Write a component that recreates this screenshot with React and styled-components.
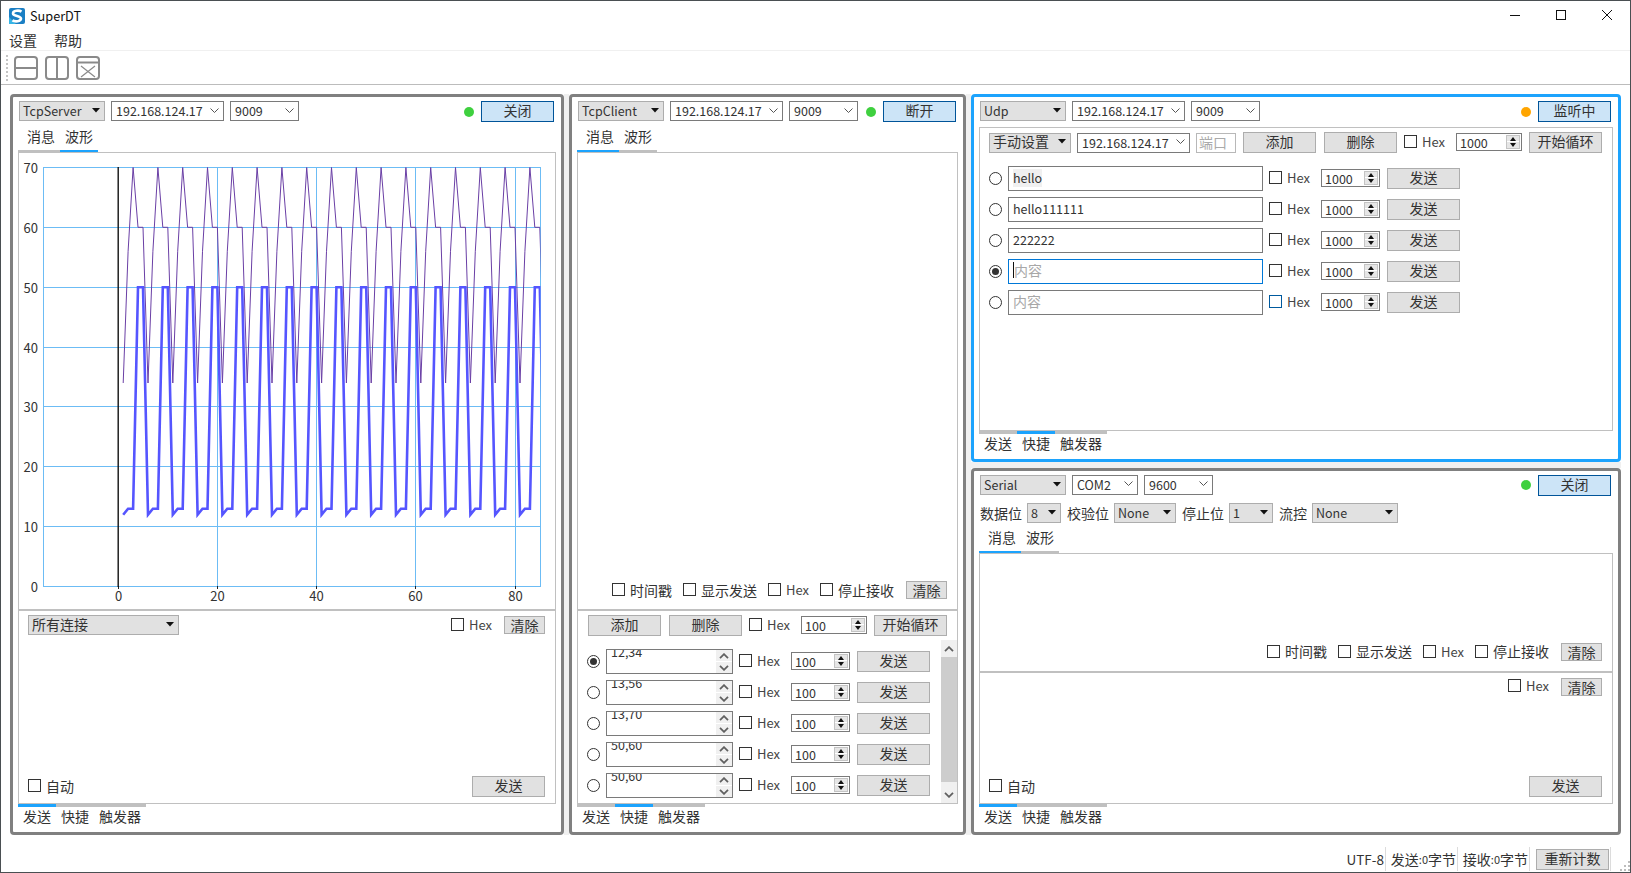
import styled, { createGlobalStyle } from "styled-components"

const samples = [[12, 34], [13, 56], [13, 70], [50, 60], [50, 60]];

const colors = {
    border: "#808080",
    active: "#1ca3fd",
    line: "#c0c0c0",
    btn: "#e1e1e1",
    btnBorder: "#adadad",
    field: "#7a7a7a",
    text: "#333333",
};

const GlobalStyle = createGlobalStyle`
    html, body, #root {
        margin: 0;
        padding: 0;
        width: 100%;
        height: 100%;
    }
    * { box-sizing: border-box; }
    body {
        font-family: "Noto Sans CJK SC", "Noto Sans", sans-serif;
        font-size: 14px;
        color: ${colors.text};
        overflow: hidden;
    }
`;

/* ---------- small controls ---------- */

function Arrow({ edit }) {
    if (edit) {
        return (
            <ArrowSlot>
                <svg width="9" height="6" viewBox="0 0 9 6"><path d="M0.5 0.5 L4.5 4.5 L8.5 0.5" fill="none" stroke="#555" strokeWidth="1" /></svg>
            </ArrowSlot>
        );
    }
    return (
        <ArrowSlot>
            <svg width="8" height="5" viewBox="0 0 8 5"><path d="M0 0 H8 L4 4.5 Z" fill="#111" /></svg>
        </ArrowSlot>
    );
}

function Select({ value, w, edit, cjk }) {
    return (
        <SelectBox $w={w} $edit={edit} $cjk={cjk}>
            <span>{value}</span>
            <Arrow edit={edit} />
        </SelectBox>
    );
}

function Toggle({ label, hover }) {
    return (
        <ToggleWrap>
            <CheckBox $hover={hover} />
            {label === "Hex" ? <HexLabel>Hex</HexLabel> : <ToggleText>{label}</ToggleText>}
        </ToggleWrap>
    );
}

function Spin({ value, w, mr }) {
    return (
        <SpinBox $w={w} $mr={mr}>
            <span>{value}</span>
            <SpinButtons>
                <SpinUp />
                <SpinDown />
            </SpinButtons>
        </SpinBox>
    );
}

function Chevron({ down }) {
    return (
        <svg width="10" height="6" viewBox="0 0 10 6">
            <path d={down ? "M1 0.8 L5 4.8 L9 0.8" : "M1 5.2 L5 1.2 L9 5.2"} fill="none" stroke="#606060" strokeWidth="1.8" />
        </svg>
    );
}

function Tabs({ names, active, bottom }) {
    return (
        <TabStrip $bottom={bottom}>
            {names.map((n, i) => (
                <Tab key={n} $bottom={bottom} $active={i === active} $first={!bottom && i === 0}>{n}</Tab>
            ))}
        </TabStrip>
    );
}

function ConnRow({ mode, ip, port, state, action, ipW = 113 }) {
    return (
        <Row>
            <Select value={mode} w={86} />
            <Select value={ip} w={ipW} edit />
            <Select value={port} w={69} edit />
            <Spacer />
            <Dot $color={state} />
            <Button $w={73} $on>{action}</Button>
        </Row>
    );
}

const msgTabs = ["消息", "波形"];
const sendTabs = ["发送", "快捷", "触发器"];

/* ---------- chart ---------- */

const toX = v => 118.2 + 4.96 * v;
const toY = v => 586.5 - 5.986 * v;

function seriesPoints(col) {
    const pts = [];
    for (let i = 0; i < 86; i++) {
        pts.push(`${toX(i + 1).toFixed(1)},${toY(samples[i % 5][col]).toFixed(1)}`);
    }
    return pts.join(" ");
}

function WaveChart() {
    const ys = [0, 10, 20, 30, 40, 50, 60, 70];
    const xs = [0, 20, 40, 60, 80];
    return (
        <ChartSvg viewBox="19 153 536 456">
            <defs>
                <clipPath id="plot"><rect x="43.5" y="167" width="497" height="420" /></clipPath>
            </defs>
            <rect x="43.5" y="167.5" width="497" height="419" fill="#fff" stroke="#6cbcf5" />
            {ys.map(v => {
                const y = Math.round(toY(v) - 0.5) + 0.5;
                return (
                    <g key={v}>
                        <line x1="43.5" x2="540.5" y1={y} y2={y} stroke="#6cbcf5" />
                        <text x="38" y={y + 5} textAnchor="end" fontSize="13" fill="#333">{v}</text>
                    </g>
                );
            })}
            {xs.map(v => {
                const x = Math.round(toX(v) - 0.5) + 0.5;
                return (
                    <g key={v}>
                        {v > 0 && <line x1={x} x2={x} y1="167" y2="587" stroke="#6cbcf5" />}
                        <line x1={x} x2={x} y1="586" y2="589" stroke="#222" />
                        <text x={x} y="601" textAnchor="middle" fontSize="13" fill="#333">{v}</text>
                    </g>
                );
            })}
            <line x1="118.2" x2="118.2" y1="167" y2="587" stroke="#111" strokeWidth="1.4" />
            <g clipPath="url(#plot)" fill="none">
                <polyline points={seriesPoints(1)} stroke="#6a3fa5" strokeWidth="1" />
                <polyline points={seriesPoints(0)} stroke="#5555ff" strokeWidth="2.6" />
            </g>
        </ChartSvg>
    );
}

/* ---------- pane contents ---------- */

function MessageOptions() {
    return (
        <OptionRow>
            <Toggle label="时间戳" />
            <Toggle label="显示发送" />
            <Toggle label="Hex" />
            <Toggle label="停止接收" />
            <Button $w={41} $h={18} $ml={1}>清除</Button>
        </OptionRow>
    );
}

function SendPane({ connections }) {
    return (
        <Pane $grow>
            <SendHead>
                {connections && <Select value="所有连接" w={151} cjk />}
                <Spacer />
                <Toggle label="Hex" />
                <Button $w={41} $h={18} $ml={12}>清除</Button>
            </SendHead>
            <Spacer />
            <SendFoot>
                <Toggle label="自动" />
                <Spacer />
                <Button $w={73}>发送</Button>
            </SendFoot>
        </Pane>
    );
}

function LoopBar({ children, spinW, spin, left }) {
    return (
        <LoopRow $left={left}>
            {children && <LoopFields>{children}</LoopFields>}
            <Button $w={73}>添加</Button>
            <Button $w={73} $ml={1}>删除</Button>
            <Toggle label="Hex" />
            <Spin value={spin} w={spinW} />
            <Button $w={73}>开始循环</Button>
        </LoopRow>
    );
}

function ShortcutRow({ checked, spin, hover, children }) {
    return (
        <ShortRow>
            <Radio $checked={checked} />
            {children}
            <Toggle label="Hex" hover={hover} />
            <Spin value={spin} w={59} mr={1} />
            <Button $w={73}>发送</Button>
        </ShortRow>
    );
}

/* ---------- app ---------- */

export default function App() {
    return (
        <Window>
            <GlobalStyle />
            <TitleBar>
                <svg width="16" height="16" viewBox="0 0 16 16">
                    <rect width="16" height="16" rx="2" fill="#1b7fc4" />
                    <path d="M0 16 L0 9 L7 16 Z" fill="#36b4e5" />
                    <path d="M12.5 3.6 C10 2 4 2.4 4 5.4 C4 8.4 12 7.6 12 10.6 C12 13.6 6 14 3.4 12.4" fill="none" stroke="#fff" strokeWidth="2.6" />
                </svg>
                <TitleText>SuperDT</TitleText>
                <Spacer />
                <WinButton>
                    <svg width="10" height="10" viewBox="0 0 10 10"><path d="M0 5.5 H10" stroke="#111" /></svg>
                </WinButton>
                <WinButton>
                    <svg width="10" height="10" viewBox="0 0 10 10"><rect x="0.5" y="0.5" width="9" height="9" fill="none" stroke="#111" /></svg>
                </WinButton>
                <WinButton>
                    <svg width="10" height="10" viewBox="0 0 10 10"><path d="M0 0 L10 10 M10 0 L0 10" stroke="#111" /></svg>
                </WinButton>
            </TitleBar>
            <MenuBar>
                <MenuItem>设置</MenuItem>
                <MenuItem>帮助</MenuItem>
            </MenuBar>
            <ToolBar>
                <Grip />
                <ToolIcon><rect x="1" y="1" width="22" height="22" rx="3" /><path d="M1 12 H23" /></ToolIcon>
                <ToolIcon><rect x="1" y="1" width="22" height="22" rx="3" /><path d="M12 1 V23" /></ToolIcon>
                <ToolIcon><rect x="1" y="1" width="22" height="22" rx="3" /><path d="M1 6.5 H23" /><path d="M5 10 L19 21 M19 10 L5 21" strokeWidth="1.2" /></ToolIcon>
            </ToolBar>

            <Main>
                <Panel $w={554}>
                    <ConnRow mode="TcpServer" ip="192.168.124.17" port="9009" state="#3fd03f" action="关闭" />
                    <Tabs names={msgTabs} active={1} />
                    <Pane $h={458}>
                        <WaveChart />
                    </Pane>
                    <SendPane connections />
                    <Tabs names={sendTabs} active={0} bottom />
                </Panel>

                <SplitV />

                <Panel $w={397}>
                    <ConnRow mode="TcpClient" ip="192.168.124.17" port="9009" state="#3fd03f" action="断开" />
                    <Tabs names={msgTabs} active={0} />
                    <Pane $h={458}>
                        <Spacer />
                        <MessageOptions />
                    </Pane>
                    <Pane $grow>
                        <LoopBar spin="100" spinW={66} left={10} />
                        <ScrollArea>
                            <Rows>
                                {["12,34", "13,56", "13,70", "50,60", "50,60"].map((t, i) => (
                                    <ShortcutRow key={i} checked={i === 0} spin="100">
                                        <TextEdit>
                                            <ClippedText>{t}</ClippedText>
                                            <EditArrows>
                                                <EditArrow><Chevron /></EditArrow>
                                                <EditArrow><Chevron down /></EditArrow>
                                            </EditArrows>
                                        </TextEdit>
                                    </ShortcutRow>
                                ))}
                            </Rows>
                            <ScrollBar>
                                <ScrollEnd><Chevron /></ScrollEnd>
                                <ScrollThumb />
                                <Spacer />
                                <ScrollEnd><Chevron down /></ScrollEnd>
                            </ScrollBar>
                        </ScrollArea>
                    </Pane>
                    <Tabs names={sendTabs} active={1} bottom />
                </Panel>

                <SplitV />

                <RightColumn>
                    <Panel $selected $grow>
                        <ConnRow mode="Udp" ip="192.168.124.17" port="9009" state="#ffa500" action="监听中" />
                        <Pane $grow $mt={5}>
                            <LoopBar spin="1000" spinW={66} left={9}>
                                <Select value="手动设置" w={82} cjk />
                                <Select value="192.168.124.17" w={113} edit />
                                <PortField>端口</PortField>
                            </LoopBar>
                            <UdpRows>
                                <ShortcutRow spin="1000"><Field><Picked>hello</Picked></Field></ShortcutRow>
                                <ShortcutRow spin="1000"><Field>hello111111</Field></ShortcutRow>
                                <ShortcutRow spin="1000"><Field>222222</Field></ShortcutRow>
                                <ShortcutRow spin="1000" checked><Field $focused><Hint $caret>内容</Hint></Field></ShortcutRow>
                                <ShortcutRow spin="1000" hover><Field><Hint>内容</Hint></Field></ShortcutRow>
                            </UdpRows>
                        </Pane>
                        <Tabs names={sendTabs} active={1} bottom />
                    </Panel>

                    <SplitH />

                    <Panel $grow>
                        <ConnRow mode="Serial" ip="COM2" ipW={66} port="9600" state="#3fd03f" action="关闭" />
                        <SerialRow>
                            <SerialField>数据位<Select value="8" w={34} /></SerialField>
                            <SerialField>校验位<Select value="None" w={62} /></SerialField>
                            <SerialField>停止位<Select value="1" w={44} /></SerialField>
                            <SerialField>流控<Select value="None" w={86} /></SerialField>
                        </SerialRow>
                        <Tabs names={msgTabs} active={0} />
                        <Pane $h={119}>
                            <Spacer />
                            <MessageOptions />
                        </Pane>
                        <SendPane />
                        <Tabs names={sendTabs} active={0} bottom />
                    </Panel>
                </RightColumn>
            </Main>

            <StatusBar>
                <StatusCell $w={60}><Narrow $size={13.5}>UTF-8</Narrow></StatusCell>
                <StatusCell $w={72}>发送<Narrow $size={11}>:0</Narrow>字节</StatusCell>
                <StatusCell $w={72}>接收<Narrow $size={11}>:0</Narrow>字节</StatusCell>
                <StatusCell $w={81}><Button $w={73}>重新计数</Button></StatusCell>
                <SizeGrip>
                    <svg width="10" height="10" viewBox="0 0 10 10" fill="#bdbdbd">
                        <rect x="8" y="0" width="2" height="2" />
                        <rect x="4" y="4" width="2" height="2" /><rect x="8" y="4" width="2" height="2" />
                        <rect x="0" y="8" width="2" height="2" /><rect x="4" y="8" width="2" height="2" /><rect x="8" y="8" width="2" height="2" />
                    </svg>
                </SizeGrip>
            </StatusBar>
        </Window>
    )
}

/* ---------- styles ---------- */

const Window = styled.div`
    width: 1631px;
    height: 873px;
    display: flex;
    flex-direction: column;
    background: #fff;
    border: 1px solid #4a4f52;
`;

const TitleBar = styled.div`
    height: 29px;
    flex: none;
    display: flex;
    align-items: center;
    padding-left: 8px;
`;

const TitleText = styled.span`
    margin-left: 5px;
    font-size: 12.7px;
    color: #111;
`;

const WinButton = styled.div`
    width: 46px;
    height: 29px;
    display: flex;
    align-items: center;
    justify-content: center;
    margin-top: -2px;
`;

const MenuBar = styled.div`
    height: 21px;
    flex: none;
    display: flex;
    align-items: center;
    gap: 17px;
    padding-left: 8px;
    border-bottom: 1px solid #f0f0f0;
`;

const MenuItem = styled.span`
    line-height: 20px;
`;

const ToolBar = styled.div`
    height: 34px;
    flex: none;
    display: flex;
    align-items: center;
    gap: 7px;
    padding-left: 5px;
    border-bottom: 1px solid #bcbcbc;
`;

const Grip = styled.div`
    width: 2px;
    height: 26px;
    margin-right: -1px;
    border-left: 2px dotted #c4c4c4;
`;

const ToolIcon = styled.svg.attrs({ viewBox: "0 0 24 24", width: 24, height: 24 })`
    fill: none;
    stroke: #8a8a8a;
    stroke-width: 2;
`;

const Main = styled.div`
    flex: 1;
    min-height: 0;
    display: flex;
    align-items: stretch;
    padding: 9px 0 12px 9px;
`;

const SplitV = styled.div`
    width: 5px;
    flex: none;
    background: #f0f0f0;
`;

const SplitH = styled.div`
    height: 6px;
    flex: none;
    background: #f0f0f0;
`;

const RightColumn = styled.div`
    width: 650px;
    flex: none;
    display: flex;
    flex-direction: column;
`;

const Panel = styled.section`
    ${p => p.$w ? `width: ${p.$w}px; flex: none;` : ""}
    ${p => p.$grow ? "flex: 1; min-height: 0;" : ""}
    display: flex;
    flex-direction: column;
    padding: 4px 5px 0;
    background: #fff;
    border: 3px solid ${p => p.$selected ? colors.active : colors.border};
    border-radius: 4px;
`;

const Row = styled.div`
    height: 21px;
    flex: none;
    display: flex;
    align-items: center;
    gap: 6px;
    padding: 0 2px 0 1px;
`;

const Spacer = styled.div`
    flex: 1;
`;

const Dot = styled.span`
    width: 10px;
    height: 10px;
    flex: none;
    margin: 0 1px 0 -4px;
    border-radius: 50%;
    background: ${p => p.$color};
`;

const SelectBox = styled.div`
    width: ${p => p.$w}px;
    height: 20px;
    flex: none;
    align-self: flex-start;
    display: flex;
    align-items: center;
    justify-content: space-between;
    padding: 0 0 ${p => p.$cjk ? 2 : 1}px ${p => p.$edit ? 4 : 3}px;
    font-size: ${p => p.$cjk ? 14 : 12.5}px;
    line-height: 17px;
    white-space: nowrap;
    color: ${colors.text};
    background: ${p => p.$edit ? "#fff" : colors.btn};
    border: 1px solid ${p => p.$edit ? colors.field : colors.btnBorder};
`;

const ArrowSlot = styled.span`
    width: 17px;
    flex: none;
    display: flex;
    align-items: center;
    justify-content: center;
`;

const Button = styled.button`
    width: ${p => p.$w}px;
    height: ${p => p.$h || 21}px;
    flex: none;
    margin: 0 0 0 ${p => p.$ml || 0}px;
    padding: 0 0 3px;
    font-family: inherit;
    font-size: 14px;
    line-height: 16px;
    color: ${colors.text};
    background: ${p => p.$on ? "#cce4f7" : colors.btn};
    border: 1px solid ${p => p.$on ? "#005499" : colors.btnBorder};
`;

const ToggleWrap = styled.label`
    height: 18px;
    margin-bottom: 1px;
    display: flex;
    align-items: center;
    flex: none;
    gap: 5px;
    white-space: nowrap;
    line-height: 18px;
`;

const ToggleText = styled.span`
    margin-top: -1px;
`;

const CheckBox = styled.span`
    width: 13px;
    height: 13px;
    flex: none;
    margin-bottom: 1px;
    background: #fff;
    border: 1px solid ${p => p.$hover ? "#005a9e" : "#333"};
`;

const HexLabel = styled.span`
    width: 23px;
    font-size: 13px;
    color: #444;
`;

const Radio = styled.span`
    width: 13px;
    height: 13px;
    flex: none;
    border: 1px solid #333;
    border-radius: 50%;
    background: #fff;
    display: flex;
    align-items: center;
    justify-content: center;
    &::after {
        content: "";
        width: 7px;
        height: 7px;
        border-radius: 50%;
        background: ${p => p.$checked ? "#333" : "transparent"};
    }
`;

const SpinBox = styled.div`
    width: ${p => p.$w}px;
    height: 18px;
    flex: none;
    margin: 0 ${p => p.$mr || 0}px 1px 0;
    display: flex;
    align-items: center;
    justify-content: space-between;
    padding-left: 3px;
    font-size: 12.5px;
    line-height: 15px;
    background: #fff;
    border: 1px solid ${colors.field};
`;

const SpinButtons = styled.div`
    width: 14px;
    height: 14px;
    margin-right: 1px;
    display: flex;
    flex-direction: column;
    background: #e6e6e6;
    border: 1px solid #c4c4c4;
`;

const SpinUp = styled.span`
    height: 6px;
    display: flex;
    align-items: center;
    justify-content: center;
    border-bottom: 1px solid #fff;
    &::after {
        content: "";
        border: 3.5px solid transparent;
        border-top: 0;
        border-bottom: 4px solid #111;
    }
`;

const SpinDown = styled.span`
    height: 6px;
    display: flex;
    align-items: center;
    justify-content: center;
    &::after {
        content: "";
        border: 3.5px solid transparent;
        border-bottom: 0;
        border-top: 4px solid #111;
    }
`;

const TabStrip = styled.div`
    flex: none;
    height: ${p => p.$bottom ? 28 : 30}px;
    display: flex;
`;

const Tab = styled.div`
    height: 100%;
    flex: none;
    display: flex;
    align-items: ${p => p.$bottom ? "flex-start" : "center"};
    padding: ${p => p.$bottom ? "0 5px" : `0 5px 0 ${p.$first ? 9 : 5}px`};
    line-height: ${p => p.$bottom ? 18 : 22}px;
    ${p => p.$bottom ? "border-top" : "border-bottom"}: ${p => p.$bottom ? 3 : 2}px solid ${p => p.$active ? colors.active : colors.line};
`;

const Pane = styled.div`
    ${p => p.$h ? `height: ${p.$h}px; flex: none;` : ""}
    ${p => p.$grow ? "flex: 1; min-height: 0;" : ""}
    ${p => p.$mt ? `margin-top: ${p.$mt}px;` : ""}
    display: flex;
    flex-direction: column;
    background: #fff;
    border: 1px solid ${colors.line};
`;

const ChartSvg = styled.svg`
    display: block;
    width: 536px;
    height: 456px;
    font-family: "Noto Sans CJK SC", "Noto Sans", sans-serif;
`;

const OptionRow = styled.div`
    height: 18px;
    flex: none;
    display: flex;
    align-items: flex-start;
    justify-content: flex-end;
    gap: 11px;
    margin: 0 10px 10px 0;
`;

const SendHead = styled.div`
    height: 20px;
    flex: none;
    display: flex;
    align-items: center;
    margin: 4px 10px 0 9px;
`;

const SendFoot = styled.div`
    height: 21px;
    flex: none;
    display: flex;
    align-items: center;
    margin: 0 10px 6px 9px;
`;

const LoopRow = styled.div`
    height: 21px;
    flex: none;
    display: flex;
    align-items: center;
    gap: 7px;
    margin: 4px 10px 0 ${p => p.$left}px;
    & > label { margin-right: 4px; }
`;

const LoopFields = styled.div`
    display: flex;
    align-items: center;
    gap: 6px;
`;

const PortField = styled.div`
    width: 40px;
    height: 20px;
    flex: none;
    padding-left: 2px;
    line-height: 16px;
    color: #aaa;
    border: 1px solid #b8b8b8;
`;

const ScrollArea = styled.div`
    flex: 1;
    min-height: 0;
    margin-top: 4px;
    display: flex;
`;

const Rows = styled.div`
    flex: 1;
    display: flex;
    flex-direction: column;
    padding: 6px 0 0 9px;
`;

const UdpRows = styled.div`
    flex: 1;
    display: flex;
    flex-direction: column;
    padding: 10px 0 0 9px;
`;

const ShortRow = styled.div`
    height: 31px;
    flex: none;
    display: flex;
    align-items: center;
    gap: 6px;
    & > label { margin-right: 5px; }
`;

const Field = styled.div`
    width: 255px;
    height: 25px;
    flex: none;
    padding-left: 4px;
    font-size: 12.5px;
    line-height: 22px;
    border: 1px solid ${p => p.$focused ? "#0078d7" : colors.field};
`;

const Picked = styled.span`
    display: inline-block;
    background: #f0f0f0;
    line-height: 18px;
`;

const Hint = styled.span`
    display: inline-block;
    font-size: 14px;
    line-height: 16px;
    color: #a8a8a8;
    ${p => p.$caret ? "border-left: 1px solid #111;" : ""}
`;

const TextEdit = styled.div`
    width: 127px;
    height: 25px;
    flex: none;
    display: flex;
    overflow: hidden;
    background: #fff;
    border: 1px solid ${colors.field};
`;

const ClippedText = styled.div`
    flex: 1;
    padding-left: 4px;
    margin-top: -6px;
    font-size: 12.5px;
    line-height: 16px;
`;

const EditArrows = styled.div`
    width: 16px;
    display: flex;
    flex-direction: column;
    gap: 1px;
`;

const EditArrow = styled.div`
    flex: 1;
    display: flex;
    align-items: center;
    justify-content: center;
    background: #f0f0f0;
`;

const ScrollBar = styled.div`
    width: 16px;
    flex: none;
    display: flex;
    flex-direction: column;
    background: #f0f0f0;
`;

const ScrollEnd = styled.div`
    height: 17px;
    flex: none;
    display: flex;
    align-items: center;
    justify-content: center;
`;

const ScrollThumb = styled.div`
    height: 125px;
    flex: none;
    background: #cdcdcd;
`;

const SerialRow = styled.div`
    height: 20px;
    flex: none;
    display: flex;
    align-items: center;
    gap: 6px;
    margin-top: 7px;
    padding-left: 1px;
`;

const SerialField = styled.div`
    display: flex;
    align-items: center;
    gap: 5px;
    white-space: nowrap;
`;

const StatusBar = styled.div`
    height: 25px;
    flex: none;
    display: flex;
    justify-content: flex-end;
    align-items: stretch;
    padding-bottom: 1px;
`;

const StatusCell = styled.div`
    width: ${p => p.$w}px;
    flex: none;
    display: flex;
    align-items: center;
    justify-content: flex-end;
    padding-right: 1px;
    border-right: 1px solid #dcdcdc;
    white-space: nowrap;
`;

const Narrow = styled.span`
    font-size: ${p => p.$size}px;
`;

const SizeGrip = styled.div`
    width: 19px;
    display: flex;
    align-items: flex-end;
    justify-content: flex-end;
`;
